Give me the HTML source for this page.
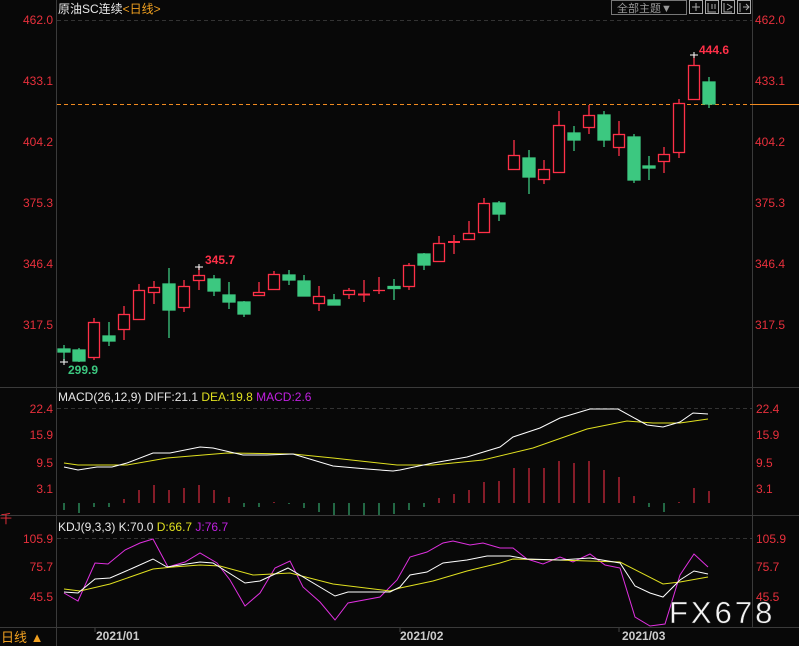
<!DOCTYPE html>
<html><head><meta charset="utf-8"><style>
body{margin:0;background:#080808;width:799px;height:646px;overflow:hidden;font-family:"Liberation Sans","Noto Sans CJK SC",sans-serif}
svg{position:absolute;left:0;top:0}
</style></head><body>
<svg width="799" height="646" xmlns="http://www.w3.org/2000/svg" font-family="Liberation Sans, Noto Sans CJK SC, sans-serif">
<rect width="799" height="646" fill="#080808"/>
<g stroke="#3a3a3a" stroke-width="1">
<line x1="56.5" y1="0" x2="56.5" y2="646"/>
<line x1="752.5" y1="0" x2="752.5" y2="627"/>
<line x1="0" y1="387.5" x2="799" y2="387.5"/>
<line x1="0" y1="515.5" x2="799" y2="515.5"/>
<line x1="0" y1="627.5" x2="799" y2="627.5"/>
</g>
<g stroke="#333" stroke-dasharray="4,3">
<line x1="57" y1="20.5" x2="752" y2="20.5"/>
<line x1="57" y1="408.5" x2="752" y2="408.5"/>
<line x1="57" y1="538.5" x2="752" y2="538.5"/>
</g>
<line x1="57" y1="104.5" x2="752" y2="104.5" stroke="#f08a20" stroke-dasharray="4,3"/>
<line x1="752" y1="104.5" x2="799" y2="104.5" stroke="#f08a20"/>
<g fill="#e8303c" font-size="12">
<text x="53" y="24" text-anchor="end">462.0</text><text x="53" y="85" text-anchor="end">433.1</text>
<text x="53" y="146" text-anchor="end">404.2</text><text x="53" y="207" text-anchor="end">375.3</text>
<text x="53" y="268" text-anchor="end">346.4</text><text x="53" y="329" text-anchor="end">317.5</text>
<text x="755" y="24">462.0</text><text x="755" y="85">433.1</text><text x="755" y="146">404.2</text>
<text x="755" y="207">375.3</text><text x="755" y="268">346.4</text><text x="755" y="329">317.5</text>
<text x="53" y="413" text-anchor="end">22.4</text><text x="53" y="439" text-anchor="end">15.9</text>
<text x="53" y="467" text-anchor="end">9.5</text><text x="53" y="493" text-anchor="end">3.1</text>
<text x="756" y="413">22.4</text><text x="756" y="439">15.9</text><text x="756" y="467">9.5</text><text x="756" y="493">3.1</text>
<text x="53" y="543" text-anchor="end">105.9</text><text x="53" y="571" text-anchor="end">75.7</text><text x="53" y="601" text-anchor="end">45.5</text>
<text x="756" y="543">105.9</text><text x="756" y="571">75.7</text><text x="756" y="601">45.5</text>
<text x="0" y="523">千</text>
</g>
<text x="58" y="13" fill="#e8e8e8" font-size="12">原油SC连续<tspan fill="#f0a020">&lt;日线&gt;</tspan></text>
<rect x="611.5" y="0.5" width="75" height="14" fill="none" stroke="#777"/>
<text x="617" y="12" fill="#999" font-size="11">全部主题▼</text>
<g fill="none" stroke="#aaa"><rect x="689.5" y="0.5" width="13" height="13"/><rect x="705.5" y="0.5" width="13" height="13"/><rect x="721.5" y="0.5" width="13" height="13"/><rect x="737.5" y="0.5" width="13" height="13"/>
<path d="M696 3v8M692 7h8M708 3v9h8M712 4v5M715 4v5M724 3v9h8M727 4l5 3-5 3M740 3v9M743 7h6M746 4l3 3-3 3"/></g>
<g stroke="#ff3048" stroke-width="1.3" fill="#080808">
<line x1="94" y1="318" x2="94" y2="360"/><rect x="88.5" y="322.5" width="11" height="35"/>
<line x1="124" y1="306" x2="124" y2="340"/><rect x="118.5" y="314.5" width="11" height="15"/>
<line x1="139" y1="284" x2="139" y2="320"/><rect x="133.5" y="290.5" width="11" height="29"/>
<line x1="154" y1="281" x2="154" y2="304"/><rect x="148.5" y="287.5" width="11" height="5"/>
<line x1="184" y1="280" x2="184" y2="312"/><rect x="178.5" y="286.5" width="11" height="21"/>
<line x1="199" y1="267" x2="199" y2="290"/><rect x="193.5" y="275.5" width="11" height="5"/>
<line x1="259" y1="282" x2="259" y2="296"/><rect x="253.5" y="292.5" width="11" height="3"/>
<line x1="274" y1="271" x2="274" y2="290"/><rect x="268.5" y="274.5" width="11" height="15"/>
<line x1="319" y1="286" x2="319" y2="311"/><rect x="313.5" y="296.5" width="11" height="7"/>
<line x1="349" y1="288" x2="349" y2="299"/><rect x="343.5" y="290.5" width="11" height="4"/>
<line x1="364" y1="280" x2="364" y2="302"/><line x1="358" y1="294.5" x2="370" y2="294.5" stroke-width="2"/>
<line x1="379" y1="277" x2="379" y2="294"/><line x1="373" y1="290.5" x2="385" y2="290.5"/>
<line x1="409" y1="263" x2="409" y2="290"/><rect x="403.5" y="265.5" width="11" height="21"/>
<line x1="439" y1="236" x2="439" y2="262"/><rect x="433.5" y="243.5" width="11" height="18"/>
<line x1="454" y1="235" x2="454" y2="254"/><line x1="448" y1="242" x2="460" y2="242" stroke-width="2"/>
<line x1="469" y1="221" x2="469" y2="240"/><rect x="463.5" y="233.5" width="11" height="6"/>
<line x1="484" y1="198" x2="484" y2="232"/><rect x="478.5" y="203.5" width="11" height="29"/>
<line x1="514" y1="140" x2="514" y2="169"/><rect x="508.5" y="155.5" width="11" height="14"/>
<line x1="544" y1="160" x2="544" y2="184"/><rect x="538.5" y="169.5" width="11" height="10"/>
<line x1="559" y1="111" x2="559" y2="173"/><rect x="553.5" y="125.5" width="11" height="47"/>
<line x1="589" y1="105" x2="589" y2="134"/><rect x="583.5" y="115.5" width="11" height="12"/>
<line x1="619" y1="121" x2="619" y2="156"/><rect x="613.5" y="134.5" width="11" height="13"/>
<line x1="664" y1="147" x2="664" y2="173"/><rect x="658.5" y="154.5" width="11" height="7"/>
<line x1="679" y1="99" x2="679" y2="158"/><rect x="673.5" y="103.5" width="11" height="49"/>
<line x1="694" y1="55" x2="694" y2="65"/><rect x="688.5" y="65.5" width="11" height="34"/>
</g>
<g stroke="#3cc880" stroke-width="1.3" fill="#3cc880">
<line x1="64" y1="345" x2="64" y2="361"/><rect x="58" y="349" width="12" height="3"/>
<line x1="79" y1="348" x2="79" y2="362"/><rect x="73" y="350" width="12" height="11"/>
<line x1="109" y1="322" x2="109" y2="346"/><rect x="103" y="336" width="12" height="5"/>
<line x1="169" y1="268" x2="169" y2="338"/><rect x="163" y="284" width="12" height="26"/>
<line x1="214" y1="275" x2="214" y2="296"/><rect x="208" y="279" width="12" height="12"/>
<line x1="229" y1="282" x2="229" y2="309"/><rect x="223" y="295" width="12" height="7"/>
<line x1="244" y1="301" x2="244" y2="317"/><rect x="238" y="302" width="12" height="12"/>
<line x1="289" y1="270" x2="289" y2="285"/><rect x="283" y="275" width="12" height="5"/>
<line x1="304" y1="275" x2="304" y2="296"/><rect x="298" y="281" width="12" height="15"/>
<line x1="334" y1="294" x2="334" y2="305"/><rect x="328" y="300" width="12" height="5"/>
<line x1="394" y1="279" x2="394" y2="300"/><rect x="388" y="286.5" width="12" height="2"/>
<line x1="424" y1="253" x2="424" y2="270"/><rect x="418" y="254" width="12" height="11"/>
<line x1="499" y1="201" x2="499" y2="221"/><rect x="493" y="203" width="12" height="11"/>
<line x1="529" y1="150" x2="529" y2="194"/><rect x="523" y="158" width="12" height="19"/>
<line x1="574" y1="126" x2="574" y2="151"/><rect x="568" y="133" width="12" height="7"/>
<line x1="604" y1="111" x2="604" y2="147"/><rect x="598" y="115" width="12" height="25"/>
<line x1="634" y1="134" x2="634" y2="183"/><rect x="628" y="137" width="12" height="43"/>
<line x1="649" y1="156" x2="649" y2="180"/><rect x="643" y="166" width="12" height="2"/>
<line x1="709" y1="77" x2="709" y2="108"/><rect x="703" y="82" width="12" height="22"/>
</g>
<g stroke="#fff"><path d="M60 362h8M64 359v6M195 267h8M199 264v6M690 55h8M694 52v6"/></g>
<text x="68" y="374" fill="#3cc880" font-size="12" font-weight="bold">299.9</text>
<text x="205" y="264" fill="#ff3048" font-size="12" font-weight="bold">345.7</text>
<text x="699" y="54" fill="#ff3048" font-size="12" font-weight="bold">444.6</text>
<text x="58" y="401" font-size="12" fill="#e8e8e8">MACD(26,12,9) DIFF:21.1 <tspan fill="#e0e020">DEA:19.8</tspan> <tspan fill="#c020e0">MACD:2.6</tspan></text>
<g stroke="#ff3048" stroke-width="1">
<path d="M124 503V499M139 503V490M154 503V485M169 503V490M184 503V488M199 503V485M214 503V490M229 503V497M274 503V502M439 503V498M454 503V494M469 503V490M484 503V482M499 503V481M514 503V468M529 503V468M544 503V468M559 503V461M574 503V463M589 503V461M604 503V470M619 503V477M634 503V496M679 503V502M694 503V488M709 503V491"/></g>
<g stroke="#3cc880" stroke-width="1">
<path d="M64 503V510M79 503V513M94 503V507M109 503V507M244 503V507M259 503V507M289 503V504M304 503V508M319 503V512M334 503V515M349 503V515M364 503V515M379 503V515M394 503V514M409 503V510M424 503V507M649 503V507M664 503V512"/></g>
<polyline fill="none" stroke="#e0e020" points="64,463 78,465 127,465 167,458 227,453 293,454 333,458 397,465 433,465 483,460 533,448 587,429 627,421 653,423 680,423 708,419"/>
<polyline fill="none" stroke="#fff" points="64,467 78,470 97,467 112,467 127,463 153,453 170,453 200,447 213,448 243,455 267,455 293,454 333,466 367,469 393,471 400,470 433,463 467,457 500,447 513,437 540,428 560,418 590,409 618,409 647,425 663,427 680,422 693,413 708,414"/>
<text x="58" y="531" font-size="12" fill="#e8e8e8">KDJ(9,3,3) K:70.0 <tspan fill="#e0e020">D:66.7</tspan> <tspan fill="#c020e0">J:76.7</tspan></text>
<polyline fill="none" stroke="#e030e0" points="64,593 78,601 95,563 108,564 125,550 140,543 153,539 168,567 185,562 200,553 217,563 230,580 245,606 260,593 275,568 290,561 303,587 320,602 335,620 348,603 380,597 397,580 410,557 427,552 443,543 453,541 470,545 483,543 500,548 513,548 527,559 543,564 560,557 573,562 590,554 605,565 620,568 635,617 650,626 665,624 680,575 694,554 708,567"/>
<polyline fill="none" stroke="#e0e020" points="64,589 80,591 110,584 153,569 173,567 200,565 220,566 253,575 290,573 333,584 390,591 400,588 433,581 467,571 500,563 513,559 557,560 620,562 663,584 680,582 708,577"/>
<polyline fill="none" stroke="#fff" points="64,592 78,593 95,579 110,578 133,568 153,559 167,567 200,562 213,563 245,583 260,581 288,568 335,596 348,592 390,592 400,587 410,575 427,572 443,563 467,560 487,556 510,556 527,559 560,560 590,558 620,563 635,586 650,593 663,597 680,580 694,571 708,574"/>
<text x="669" y="623" font-size="31" fill="#f4f4f4" letter-spacing="3" stroke="#222" stroke-width="0.5">FX678</text>
<rect x="0" y="628" width="56" height="18" fill="#080808"/>
<text x="1" y="642" font-size="13" fill="#f0a020">日线 ▲</text>
<g stroke="#444"><path d="M95 628v4M400 628v4M619 628v4"/></g>
<g font-size="12" font-weight="bold" fill="#ccc"><text x="96" y="640">2021/01</text><text x="400" y="640">2021/02</text><text x="622" y="640">2021/03</text></g>
</svg>
</body></html>
